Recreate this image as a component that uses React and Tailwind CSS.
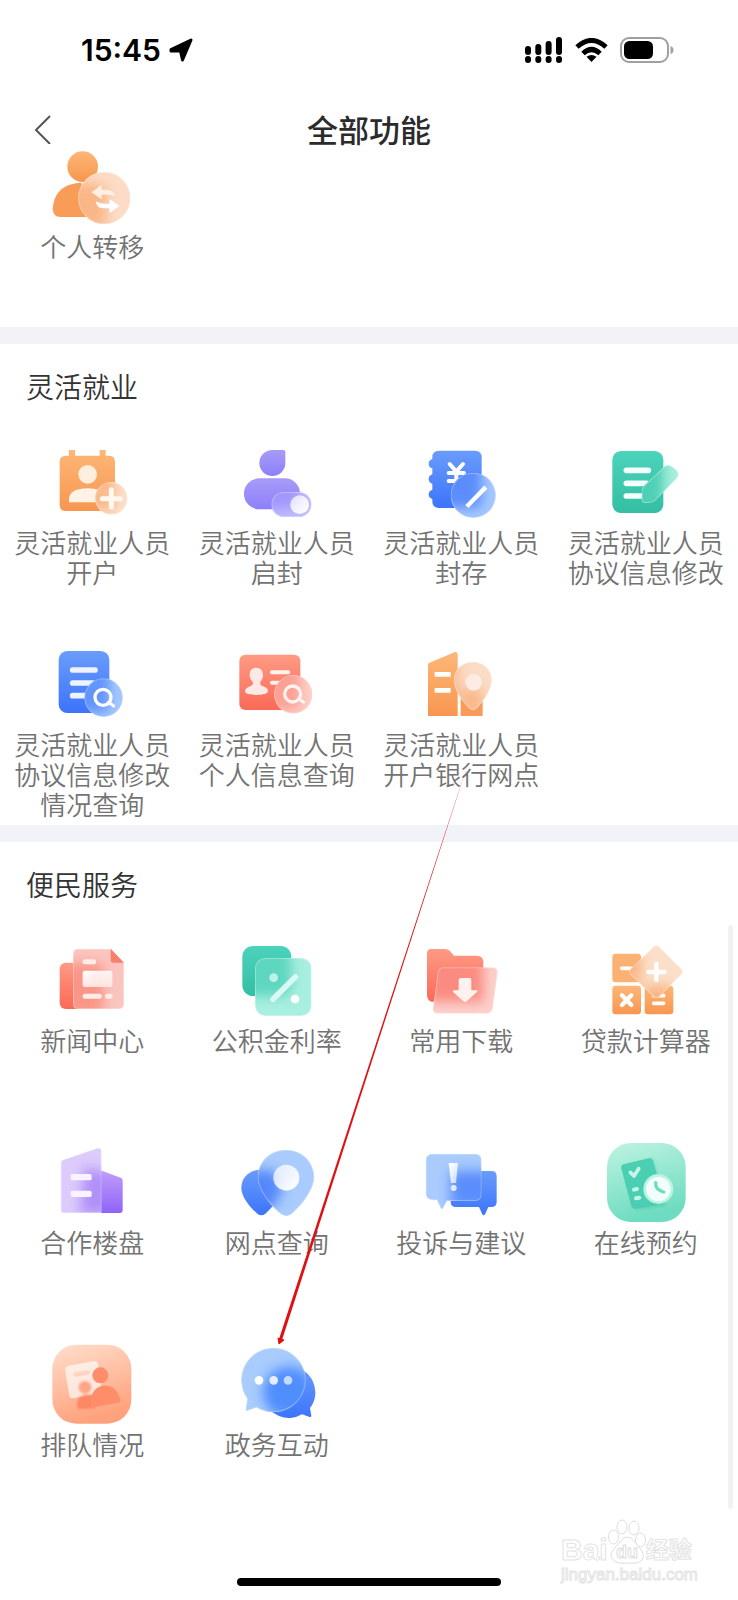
import React from 'react';

// --- PATH HELPERS ---
const circle = (cx, cy, r) =>
  `M${cx - r} ${cy}a${r} ${r} 0 1 1 ${r * 2} 0a${r} ${r} 0 1 1 ${-r * 2} 0Z`;

const box = (x, y, w, h, r) =>
  `M${x + r} ${y}h${w - 2 * r}a${r} ${r} 0 0 1 ${r} ${r}v${h - 2 * r}a${r} ${r} 0 0 1 ${-r} ${r}h${-(w - 2 * r)}a${r} ${r} 0 0 1 ${-r} ${-r}v${-(h - 2 * r)}a${r} ${r} 0 0 1 ${r} ${-r}Z`;

const gradients = [
  ['orange', '#fdb777', '#f89650'],
  ['purple', '#a79bf8', '#8c80fa'],
  ['violet', '#c6a2fb', '#8e63f8'],
  ['blue', '#6a9cfb', '#3c74fb'],
  ['green', '#4bd3bb', '#33bfa3'],
  ['red', '#ff9a84', '#fa6a57'],
];

const SharedDefs = () => (
  <svg className="absolute w-0 h-0" aria-hidden="true">
    <defs>
      {gradients.map(([id, from, to]) => (
        <linearGradient key={id} id={id} x1="0" y1="0" x2="0" y2="1">
          <stop offset="0" stopColor={from} />
          <stop offset="1" stopColor={to} />
        </linearGradient>
      ))}
      <linearGradient id="mintTile" x1="0" y1="0" x2="0.3" y2="1">
        <stop offset="0" stopColor="#bff3e2" />
        <stop offset="1" stopColor="#6edcc0" />
      </linearGradient>
      <linearGradient id="peachTile" x1="0" y1="0" x2="0.3" y2="1">
        <stop offset="0" stopColor="#ffdfcc" />
        <stop offset="1" stopColor="#ffa27d" />
      </linearGradient>
      <linearGradient id="shine" x1="0" y1="0" x2="1" y2="1">
        <stop offset="0" stopColor="#ffffff" />
        <stop offset="1" stopColor="#ffffff" stopOpacity="0.6" />
      </linearGradient>
      <linearGradient id="shineBack" x1="1" y1="1" x2="0" y2="0">
        <stop offset="0" stopColor="#ffffff" />
        <stop offset="1" stopColor="#ffffff" stopOpacity="0.65" />
      </linearGradient>
      <filter id="frost" x="-60%" y="-60%" width="220%" height="220%">
        <feGaussianBlur stdDeviation="17" />
      </filter>
      <filter id="soft" x="-30%" y="-30%" width="160%" height="160%">
        <feGaussianBlur stdDeviation="3" />
      </filter>
    </defs>
  </svg>
);

// Frosted plate: the shape behind it shows through blurred
const Glass = ({ id, front, back, tint, fill, opacity = 0.6 }) => (
  <>
    <clipPath id={id}>
      <path d={front} />
    </clipPath>
    <g clipPath={`url(#${id})`}>
      <path d={front} fill={tint} />
      <path d={back} fill={fill} opacity={opacity} filter="url(#frost)" />
      <path d={front} stroke="#fff" strokeOpacity="0.3" strokeWidth="6" />
    </g>
  </>
);

const Icon = ({ view, children }) => (
  <svg viewBox={view} className="w-20 h-20 shrink-0" fill="none" aria-hidden="true">
    {children}
  </svg>
);

const TransferIcon = () => (
  <Icon view="157 378 240 240">
    <path d={circle(249, 440, 46)} fill="url(#orange)" />
    <path d="M159 566C163 522 186 490 246 488V591H182Q160 591 159 566Z" fill="#f99c58" />
    <path d="M240 500h20v91h-20Z" fill="#f99c58" />
    <Glass
      id="g-transfer"
      front={circle(314, 534, 79)}
      back="M159 500Q200 470 320 500V620H159Z"
      tint="#fcdcc6"
      fill="#f9a66b"
      opacity={0.7}
    />
    <path d="M275 517l31-22v14h14q21 0 27 20q-10-5-22-5h-19v14Z" fill="#fff0e4" />
    <path d="M360 558l-31-22v15h-14q-15 0-27-7q3 21 24 21h17v14Z" fill="#fff" />
  </Icon>
);

const OpenAccountIcon = () => {
  const card = 'M208 90h18v17h74V90h18v17h10q18 0 18 18v130q0 18-18 18H198q-18 0-18-18V125q0-18 18-18h10Z';
  return (
    <Icon view="157 66 240 240">
      <path d={card} fill="url(#orange)" />
      <circle cx="264" cy="163" r="28" fill="#ffeedd" />
      <path d="M208 247v-12q4-30 56-30t56 30v12Z" fill="#fff3e8" />
      <Glass id="g-open" front={circle(335, 235, 49)} back={card} tint="#fce0cc" fill="#f99b58" opacity={0.55} />
      <path d="M335 209v53M308 236h54" stroke="#fff8f1" strokeWidth="15" strokeLinecap="round" />
    </Icon>
  );
};

const UnsealIcon = () => {
  const body = box(731, 175, 168, 93, 46);
  return (
    <Icon view="710 66 240 240">
      <path d="M816 90h33q6 0 6 6v33a39 39 0 1 1-39-39Z" fill="url(#purple)" />
      <path d={body} fill="url(#purple)" />
      <Glass id="g-unseal" front={box(813, 216, 121, 75, 37)} back={body} tint="#c0bbff" fill="#8c80fa" opacity={0.6} />
      <circle cx="898" cy="254" r="28" fill="url(#shineBack)" />
    </Icon>
  );
};

const SealIcon = () => {
  const book = 'M211 92h108q20 0 20 20v132q0 20-20 20H211q-20 0-20-20v-7q-11-3-11-14t11-14v-18q-11-3-11-14t11-14v-18q-11-3-11-14t11-14v-5q0-20 20-20Z';
  return (
    <Icon view="157 66 240 240">
      <path d={book} fill="url(#blue)" />
      <path d="M243 132l20 23l20-23M240 159h46M240 183h46M263 155v50" stroke="#fff" strokeWidth="12" strokeLinecap="round" />
      <Glass id="g-seal" front={circle(314, 226, 68)} back={book} tint="#a5c8ff" fill="#4279fb" opacity={0.75} />
      <path d="M299 255l48-49" stroke="#fff" strokeWidth="13" strokeLinecap="square" />
    </Icon>
  );
};

const EditIcon = () => {
  const sheet = box(729, 93, 153, 186, 26);
  return (
    <Icon view="710 66 240 240">
      <path d={sheet} fill="url(#green)" />
      <path d="M771 151h66M771 190h60M771 228h55" stroke="#f4fffc" strokeWidth="17" strokeLinecap="round" />
      <Glass
        id="g-edit"
        front="M820 201l63-60q14-12 28 0l12 10q10 12 0 24l-64 66q-8 8-20 8h-14q-8 0-8-8v-24q0-10 3-16Z"
        back={sheet}
        tint="#a6efdc"
        fill="#3fc9ae"
        opacity={0.85}
      />
    </Icon>
  );
};

const AgreementIcon = () => {
  const sheet = box(177, 63, 152, 186, 26);
  return (
    <Icon view="157 42 240 240">
      <path d={sheet} fill="url(#blue)" />
      <path d="M219 120h67M219 159h60M219 197h50" stroke="#eef4ff" strokeWidth="17" strokeLinecap="round" />
      <Glass id="g-agree" front={circle(312, 203, 58)} back={sheet} tint="#a5c8ff" fill="#4078fb" opacity={0.65} />
      <circle cx="310" cy="202" r="24" stroke="#fff" strokeWidth="10" />
      <path d="M327 217l15 11" stroke="#fff" strokeWidth="9" strokeLinecap="round" />
    </Icon>
  );
};

const PersonInfoIcon = () => {
  const card = box(717, 74, 183, 166, 18);
  return (
    <Icon view="710 42 240 240">
      <path d={card} fill="url(#red)" />
      <path d="M768 113c13 0 20 9 20 21c0 9-3 15-8 21c-2 7 1 11 6 13c12 4 17 8 17 16c0 7-15 11-35 11s-34-4-34-11c0-8 6-12 17-16c6-2 8-7 6-13c-6-6-9-12-9-21c0-12 7-21 20-21Z" fill="#ffe9e4" />
      <path d="M815 127h49M815 158h30" stroke="#fff3f0" strokeWidth="12" strokeLinecap="round" />
      <Glass id="g-person" front={circle(879, 193, 58)} back={card} tint="#fdcfc8" fill="#fb7c69" opacity={0.55} />
      <circle cx="877" cy="192" r="24" stroke="#fff3f0" strokeWidth="10" />
      <path d="M895 206l15 11" stroke="#fff3f0" strokeWidth="9" strokeLinecap="round" />
    </Icon>
  );
};

const BranchIcon = () => {
  const tower = 'M178 105q0-5 5-7l74-31q10-3 10 8v183H178Z';
  return (
    <Icon view="157 42 240 240">
      <path d={tower} fill="url(#orange)" />
      <path d="M276 175h66v83h-66Z" fill="#f99b58" />
      <path d="M198 133h48M198 181h48" stroke="#fff" strokeWidth="14" />
      <Glass
        id="g-branch"
        front="M313 95c34 0 57 25 57 56c0 26-24 62-44 83q-13 13-26 0c-22-22-45-57-45-83c0-31 24-56 58-56Z"
        back={`${tower}M276 175h66v83h-66Z`}
        tint="#fbdcc6"
        fill="#f8a062"
        opacity={0.6}
      />
      <circle cx="315" cy="157" r="25" fill="#fdebe6" />
    </Icon>
  );
};

const NewsIcon = () => (
  <Icon view="157 60 240 240">
    <path d={box(180, 128, 120, 139, 18)} fill="url(#red)" />
    <Glass
      id="g-news"
      front="M235 86h98l40 42v124q0 15-15 15H235q-15 0-15-15V101q0-15 15-15Z"
      back={box(180, 128, 132, 160, 18)}
      tint="#fbc5bf"
      fill="#fb7765"
      opacity={0.6}
    />
    <path d="M333 86l40 42h-32q-8 0-8-8Z" fill="#f77f6c" />
    <path d="M256 125h26M256 229h43M323 229h8" stroke="#ffebe7" strokeWidth="15" strokeLinecap="round" />
    <path d={box(249, 152, 89, 49, 6)} fill="url(#shine)" />
  </Icon>
);

const RateIcon = () => {
  const back = box(726, 78, 147, 150, 32);
  return (
    <Icon view="710 60 240 240">
      <path d={back} fill="url(#green)" />
      <Glass id="g-rate" front={box(764, 114, 170, 174, 30)} back={back} tint="#a8efe0" fill="#3fccb2" opacity={0.7} />
      <circle cx="820" cy="173" r="13" fill="#b9f4e7" />
      <path d="M818 238l67-67" stroke="#d8faf2" strokeWidth="17" strokeLinecap="round" />
      <circle cx="884" cy="237" r="13" fill="#fff" />
    </Icon>
  );
};

const DownloadIcon = () => {
  const folder = 'M188 87h42q8 0 14 6l12 14h68q20 0 20 20v118H188q-13-4-13-20V100q0-13 13-13Z';
  return (
    <Icon view="157 60 240 240">
      <path d={folder} fill="url(#red)" />
      <Glass
        id="g-down"
        front="M224 142h148q17 0 15 17l-14 104q-3 18-20 18H208q-17 0-15-17l14-105q3-17 17-17Z"
        back={folder}
        tint="#fcd0cb"
        fill="#fa7468"
        opacity={0.75}
      />
      <path d="M276 174h26q6 0 6 6v31h16q5 2 0 6l-30 27q-5 4-10 0l-30-27q-4-5 2-6h14v-31q0-6 6-6Z" fill="#fff1ee" />
    </Icon>
  );
};

const CalculatorIcon = () => {
  const keys = `${box(729, 101, 86, 86, 10)}${box(729, 197, 86, 86, 10)}${box(826, 197, 86, 86, 10)}`;
  return (
    <Icon view="710 60 240 240">
      <path d={box(729, 101, 86, 86, 10)} fill="#fcb174" />
      <path d={box(729, 197, 86, 86, 10)} fill="url(#orange)" />
      <path d={box(826, 197, 86, 86, 10)} fill="url(#orange)" />
      <path d="M757 145h30M853 227h30M853 250h30" stroke="#fff" strokeWidth="11" strokeLinecap="round" />
      <path d="M758 226l28 29M786 226l-28 29" stroke="#fff" strokeWidth="13" strokeLinecap="round" />
      <Glass
        id="g-calc"
        front="M852 80q9-9 18 0l66 66q9 9 0 18l-66 66q-9 9-18 0l-68-66q-9-9 0-18Z"
        back={keys}
        tint="#fbdfc9"
        fill="#fa9e5d"
        opacity={0.65}
      />
      <path d="M861 132v48M837 156h48" stroke="#fff" strokeWidth="13" strokeLinecap="round" />
    </Icon>
  );
};

const EstateIcon = () => (
  <Icon view="157 36 240 240">
    <path d="M308 123l55 20q6 2 6 9v88q0 9-9 9H270V109Z" fill="url(#violet)" />
    <Glass
      id="g-estate"
      front="M183 98q0-7 7-9l103-35q13-2 13 11v184H193q-10 0-10-10Z"
      back="M255 112l120 30v110H240Z"
      tint="#dccbfc"
      fill="#9f77f8"
      opacity={0.7}
    />
    <path d={box(213, 132, 63, 19, 5)} fill="#f8f4ff" />
    <path d={box(213, 182, 63, 19, 5)} fill="#f8f4ff" />
  </Icon>
);

const OutletIcon = () => {
  const back = 'M784 119c38 0 61 24 61 55c0 24-28 58-50 77q-12 9-24 0c-22-19-48-50-48-77c0-31 23-55 61-55Z';
  return (
    <Icon view="710 36 240 240">
      <path d={back} fill="url(#blue)" />
      <Glass
        id="g-outlet"
        front="M857 59c50 0 85 37 85 83c0 36-36 84-67 110q-17 13-34 0c-34-26-69-74-69-110c0-46 35-83 85-83Z"
        back={back}
        tint="#a9cbfd"
        fill="#477cfb"
        opacity={0.85}
      />
      <circle cx="858" cy="143" r="39" fill="url(#shineBack)" />
    </Icon>
  );
};

const FeedbackIcon = () => {
  const back = 'M262 123h106q16 0 16 16v76q0 16-16 16h-9l-10 22q-4 6-8 0l-10-22h-69q-16 0-16-16v-76q0-16 16-16Z';
  return (
    <Icon view="157 36 240 240">
      <path d={back} fill="url(#blue)" />
      <Glass
        id="g-feedback"
        front="M191 71h128q20 0 20 20v102q0 20-20 20h-84l-11 22q-4 6-8 0l-12-25h-13q-20 0-20-20V91q0-20 20-20Z"
        back={back}
        tint="#a9cbfd"
        fill="#4279fb"
        opacity={0.75}
      />
      <path d="M240 99h28l-6 60h-15Z" fill="url(#shine)" />
      <circle cx="255" cy="174" r="9" fill="#e0ebff" />
    </Icon>
  );
};

const BookingIcon = () => (
  <Icon view="710 36 240 240">
    <path d={box(713, 39, 236, 237, 72)} fill="url(#mintTile)" />
    <path d="M766 106l76-21q9-2 12 7l36 128q2 9-7 11l-76 10q-9 1-12-8l-36-116q-2-9 7-11Z" fill="#3fc4a8" opacity="0.35" filter="url(#soft)" />
    <path d="M763 103l76-18q9-2 12 7l34 120q2 9-7 11l-80 14q-9 1-12-8l-30-114q-2-9 7-12Z" fill="#4bcfb3" />
    <path d="M783 127l11 11l14-22" stroke="#c6f6e8" strokeWidth="11" strokeLinecap="round" strokeLinejoin="round" />
    <path d="M794 179l9-2M800 205l10-2" stroke="#c6f6e8" strokeWidth="12" strokeLinecap="round" />
    <circle cx="867" cy="177" r="45" fill="#b9f3e3" />
    <circle cx="867" cy="177" r="37" fill="#f1fefa" />
    <path d="M859 158q1 17 8 20q8 6 16 8" stroke="#6edcc0" strokeWidth="10" strokeLinecap="round" />
  </Icon>
);

const QueueIcon = () => (
  <Icon view="157 72 240 240">
    <path d={box(158, 74, 237, 237, 72)} fill="url(#peachTile)" />
    <path d="M207 137l75-14q11-1 13 8l14 90l-90 14q-8 1-10-8l-13-76q-1-12 11-14Z" fill="#fff" opacity="0.65" />
    <path d="M228 164l36-7" stroke="#ffd5c2" strokeWidth="13" strokeLinecap="round" />
    <circle cx="256" cy="202" r="19" fill="#ffa586" filter="url(#soft)" />
    <path d="M232 256q-2-28 26-32h30v40l-46 4q-9 0-10-12Z" fill="#fb8765" filter="url(#soft)" />
    <circle cx="302" cy="166" r="24" fill="#fe8e6b" />
    <path d="M273 261q-4-54 35-64q40-6 54 42q1 8-6 9l-74 14q-8 1-9-1Z" fill="#fe8d6a" />
  </Icon>
);

const InteractionIcon = () => {
  const back = 'M868 140a77 77 0 0 1 61 124l4 23q0 5-5 4l-23-8a77 77 0 1 1-37-143Z';
  return (
    <Icon view="710 72 240 240">
      <path d={back} fill="url(#blue)" />
      <Glass
        id="g-interact"
        front="M817 83a97 97 0 1 1-48 180l-29 10q-5 1-4-5l4-32a97 97 0 0 1 77-153Z"
        back={back}
        tint="#a9ccfd"
        fill="#4183fc"
        opacity={0.85}
      />
      <circle cx="776" cy="181" r="13" fill="#fff" />
      <circle cx="820" cy="181" r="13" fill="#e4eeff" />
      <circle cx="863" cy="181" r="13" fill="#c3dafe" />
    </Icon>
  );
};

const transferItems = [{ label: '个人转移', icon: TransferIcon }];

const flexibleItems = [
  { label: '灵活就业人员开户', icon: OpenAccountIcon },
  { label: '灵活就业人员启封', icon: UnsealIcon },
  { label: '灵活就业人员封存', icon: SealIcon },
  { label: '灵活就业人员协议信息修改', icon: EditIcon },
  { label: '灵活就业人员协议信息修改情况查询', icon: AgreementIcon },
  { label: '灵活就业人员个人信息查询', icon: PersonInfoIcon },
  { label: '灵活就业人员开户银行网点', icon: BranchIcon },
];

const serviceItems = [
  { label: '新闻中心', icon: NewsIcon },
  { label: '公积金利率', icon: RateIcon },
  { label: '常用下载', icon: DownloadIcon },
  { label: '贷款计算器', icon: CalculatorIcon },
  { label: '合作楼盘', icon: EstateIcon },
  { label: '网点查询', icon: OutletIcon },
  { label: '投诉与建议', icon: FeedbackIcon },
  { label: '在线预约', icon: BookingIcon },
  { label: '排队情况', icon: QueueIcon },
  { label: '政务互动', icon: InteractionIcon },
];

const FeatureGrid = ({ items }) => (
  <div className="grid grid-cols-4 gap-y-[26px] pb-[5px]">
    {items.map(({ label, icon: ItemIcon }) => (
      <button key={label} type="button" className="flex flex-col items-center gap-[5px] px-3">
        <ItemIcon />
        <span className="min-h-[91px] text-[26px] leading-[30px] font-[350] text-[#737373]">{label}</span>
      </button>
    ))}
  </div>
);

const Section = ({ title, items }) => (
  <section className="border-t-[17px] border-[#f2f3f8]">
    <h2 className="h-[98px] pt-6 pl-[26px] text-[28px] leading-9 font-[350] text-[#333333]">{title}</h2>
    <FeatureGrid items={items} />
  </section>
);

const StatusBar = () => (
  <div className="h-[100px] pl-[81px] pr-[64px] flex items-center justify-between text-black">
    <div className="flex items-center gap-2">
      <span className="font-[Inter,sans-serif] font-semibold text-[30px] leading-9">15:45</span>
      <svg viewBox="0 0 24 24" className="w-6 h-6" aria-hidden="true">
        <path d="M22 2L13.500 22L11.500 13H2V11.500Z" fill="currentColor" stroke="currentColor" strokeWidth="3" strokeLinejoin="round" />
      </svg>
    </div>
    <div className="flex items-center gap-3">
      <svg viewBox="0 0 39 26" className="w-[39px] h-[26px]" aria-hidden="true">
        <path d="M4 12v3M14.300 10v5M24.600 7v8M35 3v12M4 22v1M14.300 22v1M24.600 22v1M35 22v1" stroke="currentColor" strokeWidth="6" strokeLinecap="round" />
      </svg>
      <svg viewBox="0 0 33 24" className="w-[33px] h-6" fill="none" aria-hidden="true">
        <path d="M2 9Q16.500-4 31 9M8 15.500Q16.500 7.500 25 15.500" stroke="currentColor" strokeWidth="5" />
        <path d="M11.500 18.800Q16.500 15 21.500 18.800L16.500 24Z" fill="currentColor" />
      </svg>
      <svg viewBox="0 0 54 26" className="w-[54px] h-[26px]" fill="none" aria-hidden="true">
        <rect x="1" y="1" width="47" height="24" rx="8" stroke="#a0a0a0" strokeWidth="2" />
        <rect x="4" y="4" width="29" height="18" rx="5.500" fill="currentColor" />
        <path d="M50.500 9q3 1 3 4t-3 4Z" fill="#a0a0a0" />
      </svg>
    </div>
  </div>
);

const Watermark = () => (
  <div className="absolute right-[40px] bottom-[15px] font-['Liberation_Sans','Noto_Sans_CJK_SC',sans-serif] text-white [-webkit-text-stroke:1px_#e4e4e4]">
    <div className="flex items-end">
      <span className="text-[30px] leading-[30px] font-bold">Bai</span>
      <svg viewBox="0 0 38 46" className="w-[38px] h-[46px]" fill="#fff" stroke="#dedede" aria-hidden="true">
        <ellipse cx="5.500" cy="18" rx="5" ry="7" />
        <ellipse cx="14" cy="8" rx="5" ry="7" />
        <ellipse cx="26" cy="9" rx="5" ry="7" />
        <ellipse cx="32.500" cy="21" rx="5" ry="7" />
        <path d="M19 18q5 0 8 5l7 9q3 5 0 9q-4 4-15 3q-10 1-14-3q-4-5 0-10l7-8q3-5 7-5Z" />
        <text x="19" y="39" textAnchor="middle" fontSize="18" fontWeight="bold">du</text>
      </svg>
      <span className="text-[23px] leading-[30px] font-bold">经验</span>
    </div>
    <div className="text-[17px] leading-5">jingyan.baidu.com</div>
  </div>
);

const App = () => {
  return (
    <div className="relative min-h-screen bg-white font-['Noto_Sans_CJK_SC',sans-serif]">
      <SharedDefs />

      {/* Header */}
      <StatusBar />
      <header className="h-[46px] pt-3 px-[34px] grid grid-cols-[1fr_auto_1fr] items-center">
        <button type="button" aria-label="返回" className="w-fit">
          <svg viewBox="0 0 18 30" className="w-[18px] h-[30px]" fill="none" aria-hidden="true">
            <path d="M16 2L2 16l14 14" stroke="#555" strokeWidth="2" />
          </svg>
        </button>
        <h1 className="text-[31px] leading-8 font-medium text-[#2b2b2b]">全部功能</h1>
      </header>

      <main>
        <FeatureGrid items={transferItems} />
        <Section title="灵活就业" items={flexibleItems} />
        <Section title="便民服务" items={serviceItems} />
      </main>

      {/* Home indicator */}
      <footer className="pt-[53px] pb-[13px] flex justify-center">
        <div className="w-[264px] h-2 rounded-full bg-black" />
      </footer>

      {/* Scroll position */}
      <div className="absolute right-[5px] top-[925px] w-[5px] h-[584px] rounded-full bg-[#f2f2f2]" />

      {/* Pointer to the last entry */}
      <svg viewBox="0 0 200 600" className="absolute left-[272px] top-[750px] w-[200px] h-[600px] pointer-events-none" aria-hidden="true">
        <path d="M198 7L10 590l-3-1Z" fill="#e01010" />
        <path d="M7 594l-1-6l6 2Z" fill="#e01010" stroke="#e01010" strokeWidth="1" />
      </svg>

      <Watermark />
    </div>
  );
};

export default App;
